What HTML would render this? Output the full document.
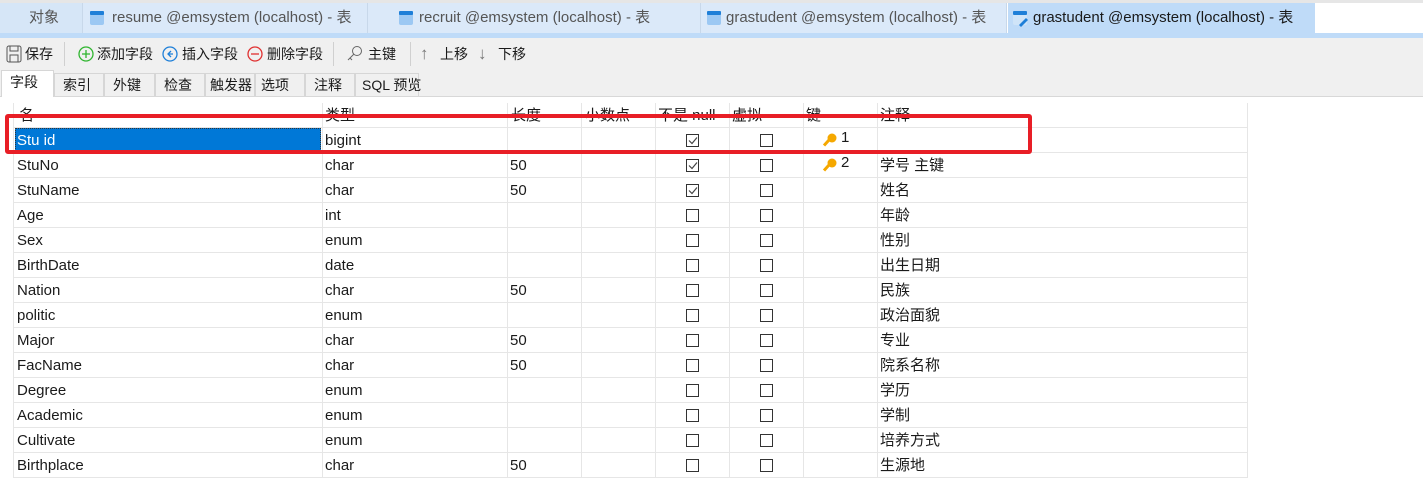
<!DOCTYPE html>
<html><head><meta charset="utf-8"><style>
*{margin:0;padding:0;box-sizing:border-box}
body{width:1423px;height:501px;background:#fff;font-family:"Liberation Sans","Noto Sans CJK SC",sans-serif;font-size:14px;color:#1a1a1a;position:relative;overflow:hidden}
.a{position:absolute;white-space:nowrap}
.tab{position:absolute;top:3px;height:30px;background:#dbe9f9;border-right:1px solid #c8d8ea;line-height:30px;font-size:15px;color:#555;white-space:nowrap}
.tab svg{position:absolute;left:6px;top:7px}
.tab span{position:absolute;left:24px}
.tb{position:absolute;top:45px;font-size:14px;color:#1a1a1a;line-height:18px;white-space:nowrap}
.st{position:absolute;top:73px;height:23px;border:1px solid #d6d6d6;border-bottom:none;background:#f0f0f0;line-height:22px;padding-left:8px;font-size:14px;white-space:nowrap}
.vl{position:absolute;top:103px;height:375px;width:1px;background:#e6e6e6}
.hl{position:absolute;left:13px;width:1235px;height:1px;background:#e6e6e6}
.cb{position:absolute;width:13px;height:13px;border:1px solid #333;background:#fff}
.cell{position:absolute;line-height:25px;font-size:15px;white-space:nowrap}
</style></head><body>
<div class="a" style="left:0;top:0;width:1423px;height:3px;background:#e6e6e6"></div>
<div class="a" style="left:0;top:33px;width:1423px;height:5px;background:#bfdbf8"></div>
<div class="a" style="left:0;top:38px;width:1423px;height:59px;background:#f0f0f0"></div>
<div class="a" style="left:0;top:96px;width:1423px;height:1px;background:#d8d8d8"></div>
<div class="a" style="left:1315px;top:3px;width:108px;height:30px;background:#fff"></div>

<div class="tab" style="left:0;width:83px;background:#d6e6f7"><span style="left:29px">对象</span></div>
<div class="tab" style="left:83px;width:285px"><svg width="16" height="16"><rect x="1" y="1" width="14" height="14" rx="2" fill="#9cc8f3"/><rect x="1" y="1" width="14" height="4" rx="1" fill="#1e7fd8"/></svg><span style="left:29px">resume @emsystem (localhost) - 表</span></div>
<div class="tab" style="left:368px;width:333px"><svg width="16" height="16" style="left:30px"><rect x="1" y="1" width="14" height="14" rx="2" fill="#9cc8f3"/><rect x="1" y="1" width="14" height="4" rx="1" fill="#1e7fd8"/></svg><span style="left:51px">recruit @emsystem (localhost) - 表</span></div>
<div class="tab" style="left:701px;width:306px"><svg width="16" height="16" style="left:5px"><rect x="1" y="1" width="14" height="14" rx="2" fill="#9cc8f3"/><rect x="1" y="1" width="14" height="4" rx="1" fill="#1e7fd8"/></svg><span style="left:25px">grastudent @emsystem (localhost) - 表</span></div>
<div class="tab" style="left:1008px;width:307px;background:#bfdbf8;color:#1a1a1a;border:none"><svg width="18" height="18" style="left:4px"><rect x="1" y="1" width="14" height="14" rx="2" fill="#cfe4f8"/><rect x="1" y="1" width="14" height="4" rx="1" fill="#1e7fd8"/><path d="M7 15 L14 8 L16 10 L9 17 Z" fill="#1e7fd8"/></svg><span style="left:25px">grastudent @emsystem (localhost) - 表</span></div>

<svg class="a" style="left:6px;top:45px" width="16" height="18"><rect x="1" y="1" width="14" height="16" rx="2" fill="none" stroke="#555"/><rect x="4" y="1" width="8" height="5" fill="none" stroke="#555"/><rect x="4" y="10" width="8" height="7" fill="none" stroke="#555"/></svg>
<div class="tb" style="left:25px">保存</div>
<div class="a" style="left:64px;top:42px;width:1px;height:24px;background:#d0d0d0"></div>
<svg class="a" style="left:78px;top:46px" width="16" height="16"><circle cx="8" cy="8" r="7" fill="none" stroke="#2fb52f" stroke-width="1.3"/><path d="M8 4v8M4 8h8" stroke="#2fb52f" stroke-width="1.3"/></svg>
<div class="tb" style="left:97px">添加字段</div>
<svg class="a" style="left:162px;top:46px" width="16" height="16"><circle cx="8" cy="8" r="7" fill="none" stroke="#1e7fd8" stroke-width="1.3"/><path d="M9 5L6 8l3 3M6 8h5" fill="none" stroke="#1e7fd8" stroke-width="1.3"/></svg>
<div class="tb" style="left:182px">插入字段</div>
<svg class="a" style="left:247px;top:46px" width="16" height="16"><circle cx="8" cy="8" r="7" fill="none" stroke="#e03030" stroke-width="1.3"/><path d="M4 8h8" stroke="#e03030" stroke-width="1.3"/></svg>
<div class="tb" style="left:267px">删除字段</div>
<div class="a" style="left:333px;top:42px;width:1px;height:24px;background:#d0d0d0"></div>
<svg class="a" style="left:346px;top:45px" width="17" height="17"><circle cx="11" cy="6" r="4.5" fill="none" stroke="#666"/><path d="M8 9L2 15M4 13l2 2" stroke="#666" fill="none"/></svg>
<div class="tb" style="left:368px">主键</div>
<div class="a" style="left:410px;top:42px;width:1px;height:24px;background:#d0d0d0"></div>
<div class="tb" style="left:420px;color:#777;font-size:17px">↑</div>
<div class="tb" style="left:440px">上移</div>
<div class="tb" style="left:478px;color:#777;font-size:17px">↓</div>
<div class="tb" style="left:498px">下移</div>

<div class="st" style="left:1px;width:53px;background:#fff;top:70px;height:27px;border-color:#d6d6d6">字段</div>
<div class="st" style="left:54px;width:50px">索引</div>
<div class="st" style="left:104px;width:51px">外键</div>
<div class="st" style="left:155px;width:50px">检查</div>
<div class="st" style="left:205px;width:50px;padding-left:4px">触发器</div>
<div class="st" style="left:255px;width:50px;padding-left:5px">选项</div>
<div class="st" style="left:305px;width:50px">注释</div>
<div class="st" style="left:355px;width:64px;padding-left:6px">SQL 预览</div>

<div class="vl" style="left:13px"></div>
<div class="vl" style="left:322px"></div>
<div class="vl" style="left:507px"></div>
<div class="vl" style="left:581px"></div>
<div class="vl" style="left:655px"></div>
<div class="vl" style="left:729px"></div>
<div class="vl" style="left:803px"></div>
<div class="vl" style="left:877px"></div>
<div class="vl" style="left:1247px"></div>

<div class="cell" style="left:19px;top:103px">名</div>
<div class="cell" style="left:325px;top:103px">类型</div>
<div class="cell" style="left:511px;top:103px">长度</div>
<div class="cell" style="left:585px;top:103px">小数点</div>
<div class="cell" style="left:658px;top:103px">不是 null</div>
<div class="cell" style="left:732px;top:103px">虚拟</div>
<div class="cell" style="left:806px;top:103px">键</div>
<div class="cell" style="left:880px;top:103px">注释</div>

<div class="a" style="left:15px;top:128px;width:306px;height:23px;background:#0078d7;outline:1px dotted #333;outline-offset:-1px"></div>

<div id="rows"></div>
<script>
var d=[["Stu_id","bigint","",1,"1",""],["StuNo","char","50",1,"2","学号 主键"],["StuName","char","50",1,"","姓名"],["Age","int","",0,"","年龄"],["Sex","enum","",0,"","性别"],["BirthDate","date","",0,"","出生日期"],["Nation","char","50",0,"","民族"],["politic","enum","",0,"","政治面貌"],["Major","char","50",0,"","专业"],["FacName","char","50",0,"","院系名称"],["Degree","enum","",0,"","学历"],["Academic","enum","",0,"","学制"],["Cultivate","enum","",0,"","培养方式"],["Birthplace","char","50",0,"","生源地"]];
var h='<div class="hl" style="top:127px"></div>';
d.forEach(function(r,i){var t=127+25*i;
h+='<div class="hl" style="top:'+(t+25)+'px"></div>';
h+='<div class="cell" style="left:17px;top:'+(t+1)+'px;'+(i==0?'color:#fff':'')+'">'+(i==0?'Stu id':r[0])+'</div>';
h+='<div class="cell" style="left:325px;top:'+(t+1)+'px">'+r[1]+'</div>';
h+='<div class="cell" style="left:510px;top:'+(t+1)+'px">'+r[2]+'</div>';
h+='<div class="cb" style="left:686px;top:'+(t+7)+'px">'+(r[3]?'<svg width="11" height="11" style="position:absolute;left:0;top:0"><path d="M2 5.5l3 3 5-6" fill="none" stroke="#444" stroke-width="1.2"/></svg>':'')+'</div>';
h+='<div class="cb" style="left:760px;top:'+(t+7)+'px"></div>';
if(r[4])h+='<svg style="position:absolute;left:822px;top:'+(t+5)+'px" width="16" height="16"><circle cx="10" cy="6" r="4.5" fill="#f5a800"/><path d="M7 8L2 13.5" stroke="#f5a800" stroke-width="3"/></svg><div class="cell" style="left:841px;top:'+(t-2)+'px">'+r[4]+'</div>';
h+='<div class="cell" style="left:880px;top:'+(t+1)+'px">'+r[5]+'</div>';
});
document.getElementById('rows').innerHTML=h;
</script>
<div class="a" style="left:5px;top:114px;width:1027px;height:40px;border:4px solid #e81e26;border-radius:3px"></div>
</body></html>
